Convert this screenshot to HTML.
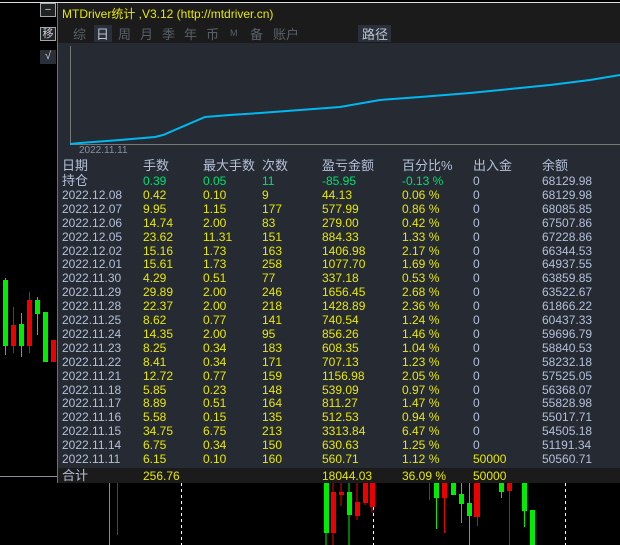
<!DOCTYPE html>
<html><head><meta charset="utf-8"><style>
*{margin:0;padding:0;box-sizing:border-box}
body{width:620px;height:545px;background:#000;position:relative;overflow:hidden;font-family:"Liberation Sans","Noto Sans CJK SC",sans-serif;font-size:12px}
.a{position:absolute}
#panel{left:57px;top:3px;width:563px;height:480px;background:#252a33;border-left:1px solid #6a7080;border-bottom:1px solid #6a7080}
#top{left:58px;top:3px;width:562px;height:40px;background:#1b1b1b}
.tab{position:absolute;top:24px;font-size:13px;color:#5a606a}
.r{position:absolute;left:62px;height:14px;line-height:14px;white-space:nowrap;font-size:12px}
.r span{position:absolute}
.btn{position:absolute;left:40px;width:16px;height:14px;border:1px solid #9aa;color:#ccd;font-size:11px;line-height:12px;text-align:center;background:#222}
</style></head><body>
<div class="a" style="left:0;top:2px;width:620px;height:1px;background:#ddd"></div>
<div class="btn" style="top:3px">−</div>
<div class="btn" style="top:27px;font-size:11px">移</div>
<div class="btn" style="top:50px;background:#2a3038;border:none">√</div>
<div class="a" id="panel"></div>
<div class="a" id="top"></div>
<div class="a" style="left:62px;top:5px;color:#e8e800;font-size:12px">MTDriver统计 ,V3.12 (http://mtdriver.cn)</div>
<div class="tab" style="left:73px">综</div>
<div class="a" style="left:94px;top:25px;width:18px;height:17px;background:#2a303a"></div>
<div class="tab" style="left:96px;color:#bcc4d0">日</div>
<div class="tab" style="left:118px">周</div>
<div class="tab" style="left:140px">月</div>
<div class="tab" style="left:162px">季</div>
<div class="tab" style="left:184px">年</div>
<div class="tab" style="left:206px">币</div>
<div class="tab" style="left:230px;font-size:9px;top:28px">M</div>
<div class="tab" style="left:250px">备</div>
<div class="tab" style="left:273px">账户</div>
<div class="a" style="left:358px;top:25px;width:33px;height:17px;background:#2a303a"></div>
<div class="tab" style="left:362px;color:#bcc4d0">路径</div>
<svg class="a" style="left:0;top:0" width="620" height="545">
<line x1="70.5" y1="46" x2="70.5" y2="144" stroke="#777"/>
<line x1="70" y1="144.5" x2="620" y2="144.5" stroke="#777"/>
<polyline fill="none" stroke="#00b8f0" stroke-width="2" points="70,144 80,143 120,140 155,137 163,135 205,117 230,115 260,113 300,110 340,107 380,100 420,97 470,93 510,89 550,85 590,80 620,75"/>
<g stroke-width="1">
<rect x="3" y="280" width="5" height="66" fill="#00ee00"/><line x1="5.5" y1="278" x2="5.5" y2="355" stroke="#00ee00"/>
<rect x="11" y="325" width="5" height="21" fill="#ee0000"/><line x1="13.5" y1="307" x2="13.5" y2="353" stroke="#ee0000"/>
<rect x="19" y="324" width="5" height="22" fill="#00ee00"/><line x1="21.5" y1="313" x2="21.5" y2="357" stroke="#00ee00"/>
<rect x="27" y="300" width="5" height="46" fill="#ee0000"/><line x1="29.5" y1="292" x2="29.5" y2="353" stroke="#ee0000"/>
<rect x="35" y="300" width="5" height="14" fill="#00ee00"/><line x1="37.5" y1="297" x2="37.5" y2="335" stroke="#00ee00"/>
<rect x="43" y="312" width="5" height="50" fill="#00ee00"/>
<rect x="51" y="340" width="5" height="22" fill="#ee0000"/>
<line x1="0" y1="476.5" x2="57" y2="476.5" stroke="#8090a0"/>
<line x1="109.5" y1="483" x2="109.5" y2="545" stroke="#00ee00"/>
<line x1="117.5" y1="483" x2="117.5" y2="535" stroke="#ee0000"/>
<line x1="181.5" y1="483" x2="181.5" y2="545" stroke="#fff" stroke-dasharray="3,3"/>
<line x1="373.5" y1="483" x2="373.5" y2="545" stroke="#fff" stroke-dasharray="3,3"/>
<line x1="565.5" y1="483" x2="565.5" y2="545" stroke="#fff" stroke-dasharray="3,3"/>
<line x1="326" y1="483" x2="326" y2="545" stroke="#00ee00"/><rect x="324" y="483" width="5" height="50" fill="#00ee00"/>
<line x1="333" y1="483" x2="333" y2="545" stroke="#ee0000"/><rect x="331" y="492" width="5" height="41" fill="#ee0000"/>
<line x1="341" y1="483" x2="341" y2="506" stroke="#ee0000"/><rect x="339" y="492" width="5" height="3" fill="#ee0000"/>
<line x1="349" y1="483" x2="349" y2="545" stroke="#00ee00"/><rect x="347" y="492" width="5" height="23" fill="#00ee00"/>
<line x1="357" y1="483" x2="357" y2="520" stroke="#ee0000"/><rect x="355" y="502" width="5" height="14" fill="#ee0000"/>
<line x1="365" y1="483" x2="365" y2="505" stroke="#ee0000"/><rect x="363" y="483" width="5" height="20" fill="#ee0000"/>
<line x1="372" y1="483" x2="372" y2="513" stroke="#ee0000"/><rect x="370" y="483" width="5" height="24" fill="#ee0000"/>
<line x1="429.5" y1="483" x2="429.5" y2="500" stroke="#ee0000"/>
<line x1="436.5" y1="483" x2="436.5" y2="529" stroke="#00ee00"/><rect x="434" y="483" width="5" height="15" fill="#00ee00"/>
<line x1="444.5" y1="483" x2="444.5" y2="533" stroke="#ee0000"/><rect x="442" y="483" width="5" height="15" fill="#ee0000"/>
<rect x="451" y="483" width="5" height="12" fill="#00ee00"/>
<line x1="461.5" y1="483" x2="461.5" y2="523" stroke="#00ee00"/><rect x="459" y="494" width="5" height="10" fill="#00ee00"/>
<line x1="469.5" y1="483" x2="469.5" y2="545" stroke="#00ee00"/><rect x="467" y="503" width="5" height="13" fill="#00ee00"/>
<line x1="477.5" y1="483" x2="477.5" y2="526" stroke="#ee0000"/><rect x="474" y="483" width="6" height="34" fill="#ee0000"/>
<line x1="501.5" y1="483" x2="501.5" y2="498" stroke="#00ee00"/><rect x="499" y="483" width="5" height="9" fill="#00ee00"/>
<line x1="509.5" y1="483" x2="509.5" y2="545" stroke="#ee0000"/><rect x="507" y="483" width="5" height="8" fill="#ee0000"/>
<line x1="524.5" y1="483" x2="524.5" y2="527" stroke="#00ee00"/><rect x="522" y="483" width="5" height="28" fill="#00ee00"/>
<rect x="530" y="510" width="5" height="35" fill="#00ee00"/>
</g>
</svg>
<div class="a" style="left:79px;top:145px;color:#8a92a0;font-size:10px">2022.11.11</div>
<div class="a" style="left:58px;top:468px;width:562px;height:15px;background:#1b1b1b"></div>
<div id="rows"></div>
<script>
var X=[0,81,141,200,260,340,411,480];
var rows=[
["日期","手数","最大手数","次数","盈亏金额","百分比%","出入金","余额"],
["持仓","0.39","0.05","11","-85.95","-0.13 %","0","68129.98"],
["2022.12.08","0.42","0.10","9","44.13","0.06 %","0","68129.98"],
["2022.12.07","9.95","1.15","177","577.99","0.86 %","0","68085.85"],
["2022.12.06","14.74","2.00","83","279.00","0.42 %","0","67507.86"],
["2022.12.05","23.62","11.31","151","884.33","1.33 %","0","67228.86"],
["2022.12.02","15.16","1.73","163","1406.98","2.17 %","0","66344.53"],
["2022.12.01","15.61","1.73","258","1077.70","1.69 %","0","64937.55"],
["2022.11.30","4.29","0.51","77","337.18","0.53 %","0","63859.85"],
["2022.11.29","29.89","2.00","246","1656.45","2.68 %","0","63522.67"],
["2022.11.28","22.37","2.00","218","1428.89","2.36 %","0","61866.22"],
["2022.11.25","8.62","0.77","141","740.54","1.24 %","0","60437.33"],
["2022.11.24","14.35","2.00","95","856.26","1.46 %","0","59696.79"],
["2022.11.23","8.25","0.34","183","608.35","1.04 %","0","58840.53"],
["2022.11.22","8.41","0.34","171","707.13","1.23 %","0","58232.18"],
["2022.11.21","12.72","0.77","159","1156.98","2.05 %","0","57525.05"],
["2022.11.18","5.85","0.23","148","539.09","0.97 %","0","56368.07"],
["2022.11.17","8.89","0.51","164","811.27","1.47 %","0","55828.98"],
["2022.11.16","5.58","0.15","135","512.53","0.94 %","0","55017.71"],
["2022.11.15","34.75","6.75","213","3313.84","6.47 %","0","54505.18"],
["2022.11.14","6.75","0.34","150","630.63","1.25 %","0","51191.34"],
["2022.11.11","6.15","0.10","160","560.71","1.12 %","50000","50560.71"],
["合计","256.76","","","18044.03","36.09 %","50000",""]];
var h="",lb="#b4c0d8";
rows.forEach(function(r,i){
 var top=i==0?159:(i==rows.length-1?469:i==1?174:174+(i-1)*13.9);
 h+='<div class="r" style="top:'+top+'px">';
 r.forEach(function(c,j){
  var col;
  if(i==0) col=lb;
  else if(i==1) col=(j==0?lb:(j>=6?lb:"#00e070"));
  else col=(j==0||j>=6&&j!=6?lb:"#e8e800");
  if(i>1&&j==6) col=(c=="0"?lb:"#e8e800");
  if(j==7) col=lb;
  var fs=(i<=1||i==rows.length-1)&&j==0?'font-size:13px;':(i==0?'font-size:13px;':'');
  h+='<span style="left:'+X[j]+'px;color:'+col+';'+fs+'">'+c+'</span>';
 });
 h+='</div>';
});
document.getElementById("rows").innerHTML=h;
</script>
</body></html>
